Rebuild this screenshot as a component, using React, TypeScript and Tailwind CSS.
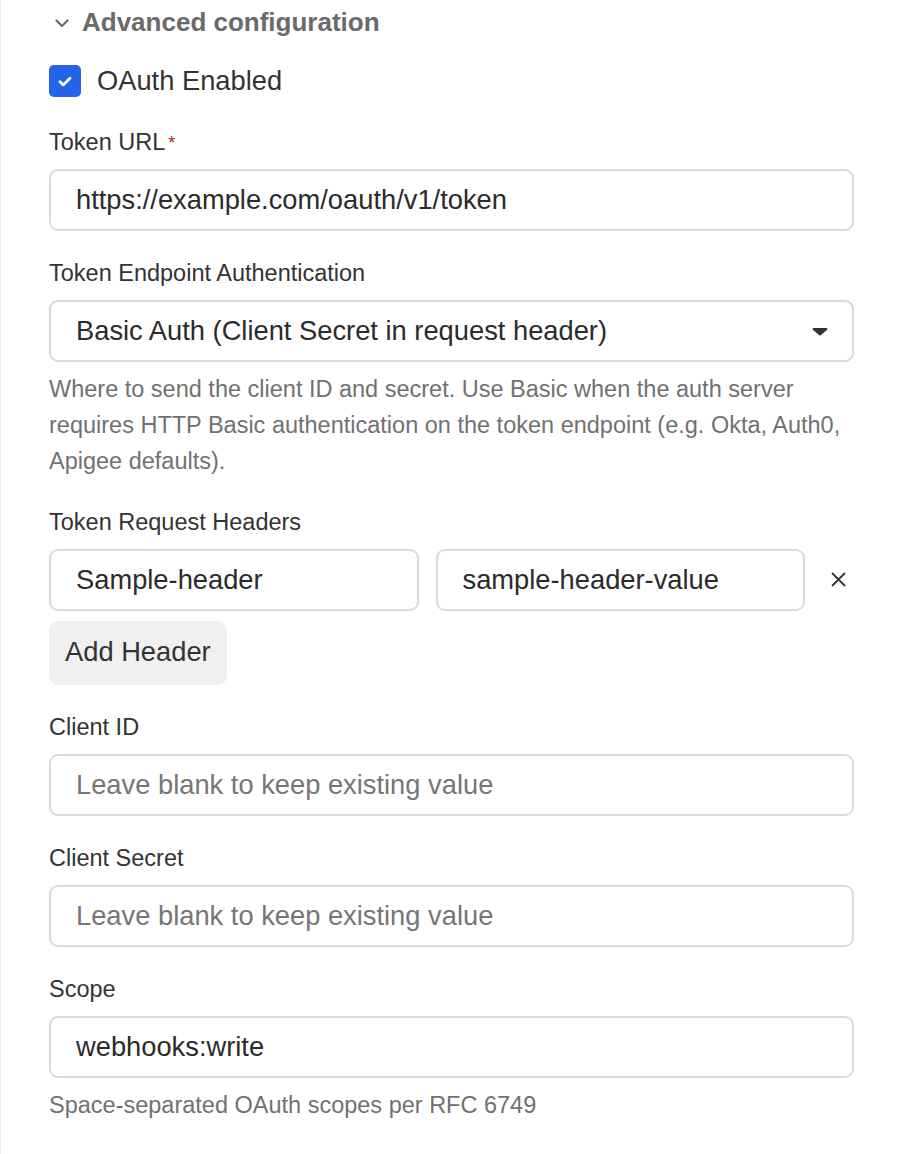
import React from "react";

function Label({ children, required }: { children: React.ReactNode; required?: boolean }) {
  return (
    <div className="text-[23.5px] leading-[36px] text-[#333333] flex items-start">
      <span>{children}</span>
      {required && <span className="text-[#b42318] text-[18px] leading-[32px] ml-[3px] mt-[3px]">*</span>}
    </div>
  );
}

function TextInput({ value, placeholder }: { value?: string; placeholder?: string }) {
  return (
    <input
      readOnly
      value={value ?? ""}
      placeholder={placeholder}
      className="w-full h-[62px] border-2 border-[#dadada] rounded-[9px] bg-white px-[25px] text-[27.3px] text-[#2b2b2b] placeholder:text-[#767676] outline-none font-['Liberation_Sans',Arial,sans-serif]"
    />
  );
}

function Help({ children }: { children: React.ReactNode }) {
  return <p className="mt-[9px] text-[23.5px] leading-[36px] text-[#717171]">{children}</p>;
}

export default function App() {
  return (
    <div className="min-h-screen bg-white border-l border-[#ececec] pl-12 pr-12 font-['Liberation_Sans',Arial,sans-serif]">
      <div className="h-[44px] flex items-center gap-[13px]">
        <svg width="14" height="9" viewBox="0 0 14 9" className="ml-[6px] mt-[2px]" fill="none">
          <path d="M1.5 1.5l5.5 5.5 5.5-5.5" stroke="#6a6a6a" strokeWidth="2.2" strokeLinecap="round" strokeLinejoin="round" />
        </svg>
        <span className="text-[26px] font-bold text-[#6a6a6a]">Advanced configuration</span>
      </div>

      <div className="mt-[19px] h-[36px] flex items-center gap-[16px]">
        <div className="w-[32px] h-[32px] rounded-[5px] bg-[#2563eb] flex items-center justify-center">
          <svg width="14" height="11" viewBox="0 0 14 11" fill="none">
            <path d="M2 5.8l3.2 3.2L12 2.2" stroke="white" strokeWidth="2.8" strokeLinecap="round" strokeLinejoin="round" />
          </svg>
        </div>
        <span className="text-[27.3px] text-[#333333]">OAuth Enabled</span>
      </div>

      <div className="mt-[25px] flex flex-col gap-[24.3px]">
        <div>
          <Label required>Token URL</Label>
          <div className="mt-[9px]">
            <TextInput value="https://example.com/oauth/v1/token" />
          </div>
        </div>

        <div>
          <Label>Token Endpoint Authentication</Label>
          <div className="mt-[9px] w-full h-[62px] border-2 border-[#dadada] rounded-[9px] bg-white pl-[25px] pr-[24px] flex items-center justify-between">
            <span className="text-[27.3px] text-[#2b2b2b]">Basic Auth (Client Secret in request header)</span>
            <svg width="16" height="9" viewBox="0 0 16 9">
              <path d="M1.5 1h13a1 1 0 0 1 .7 1.7l-6.5 5.6a1 1 0 0 1-1.4 0L.8 2.7A1 1 0 0 1 1.5 1z" fill="#333333" />
            </svg>
          </div>
          <Help>
            Where to send the client ID and secret. Use Basic when the auth server requires HTTP Basic authentication on the token endpoint (e.g. Okta, Auth0, Apigee defaults).
          </Help>
        </div>

        <div>
          <Label>Token Request Headers</Label>
          <div className="mt-[9px] flex items-center gap-[17px]">
            <div className="flex-1">
              <TextInput value="Sample-header" />
            </div>
            <div className="flex-1">
              <TextInput value="sample-header-value" />
            </div>
            <button className="w-[32px] h-[32px] flex items-center justify-center">
              <svg width="15" height="15" viewBox="0 0 15 15" fill="none">
                <path d="M1.5 1.5l12 12M13.5 1.5l-12 12" stroke="#333333" strokeWidth="1.8" strokeLinecap="round" />
              </svg>
            </button>
          </div>
          <button className="mt-[10px] h-[64px] px-[16px] rounded-[9px] bg-[#f0f0f0] text-[27.3px] text-[#333333]">
            Add Header
          </button>
        </div>

        <div>
          <Label>Client ID</Label>
          <div className="mt-[9px]">
            <TextInput placeholder="Leave blank to keep existing value" />
          </div>
        </div>

        <div>
          <Label>Client Secret</Label>
          <div className="mt-[9px]">
            <TextInput placeholder="Leave blank to keep existing value" />
          </div>
        </div>

        <div>
          <Label>Scope</Label>
          <div className="mt-[9px]">
            <TextInput value="webhooks:write" />
          </div>
          <Help>Space-separated OAuth scopes per RFC 6749</Help>
        </div>
      </div>
    </div>
  );
}
